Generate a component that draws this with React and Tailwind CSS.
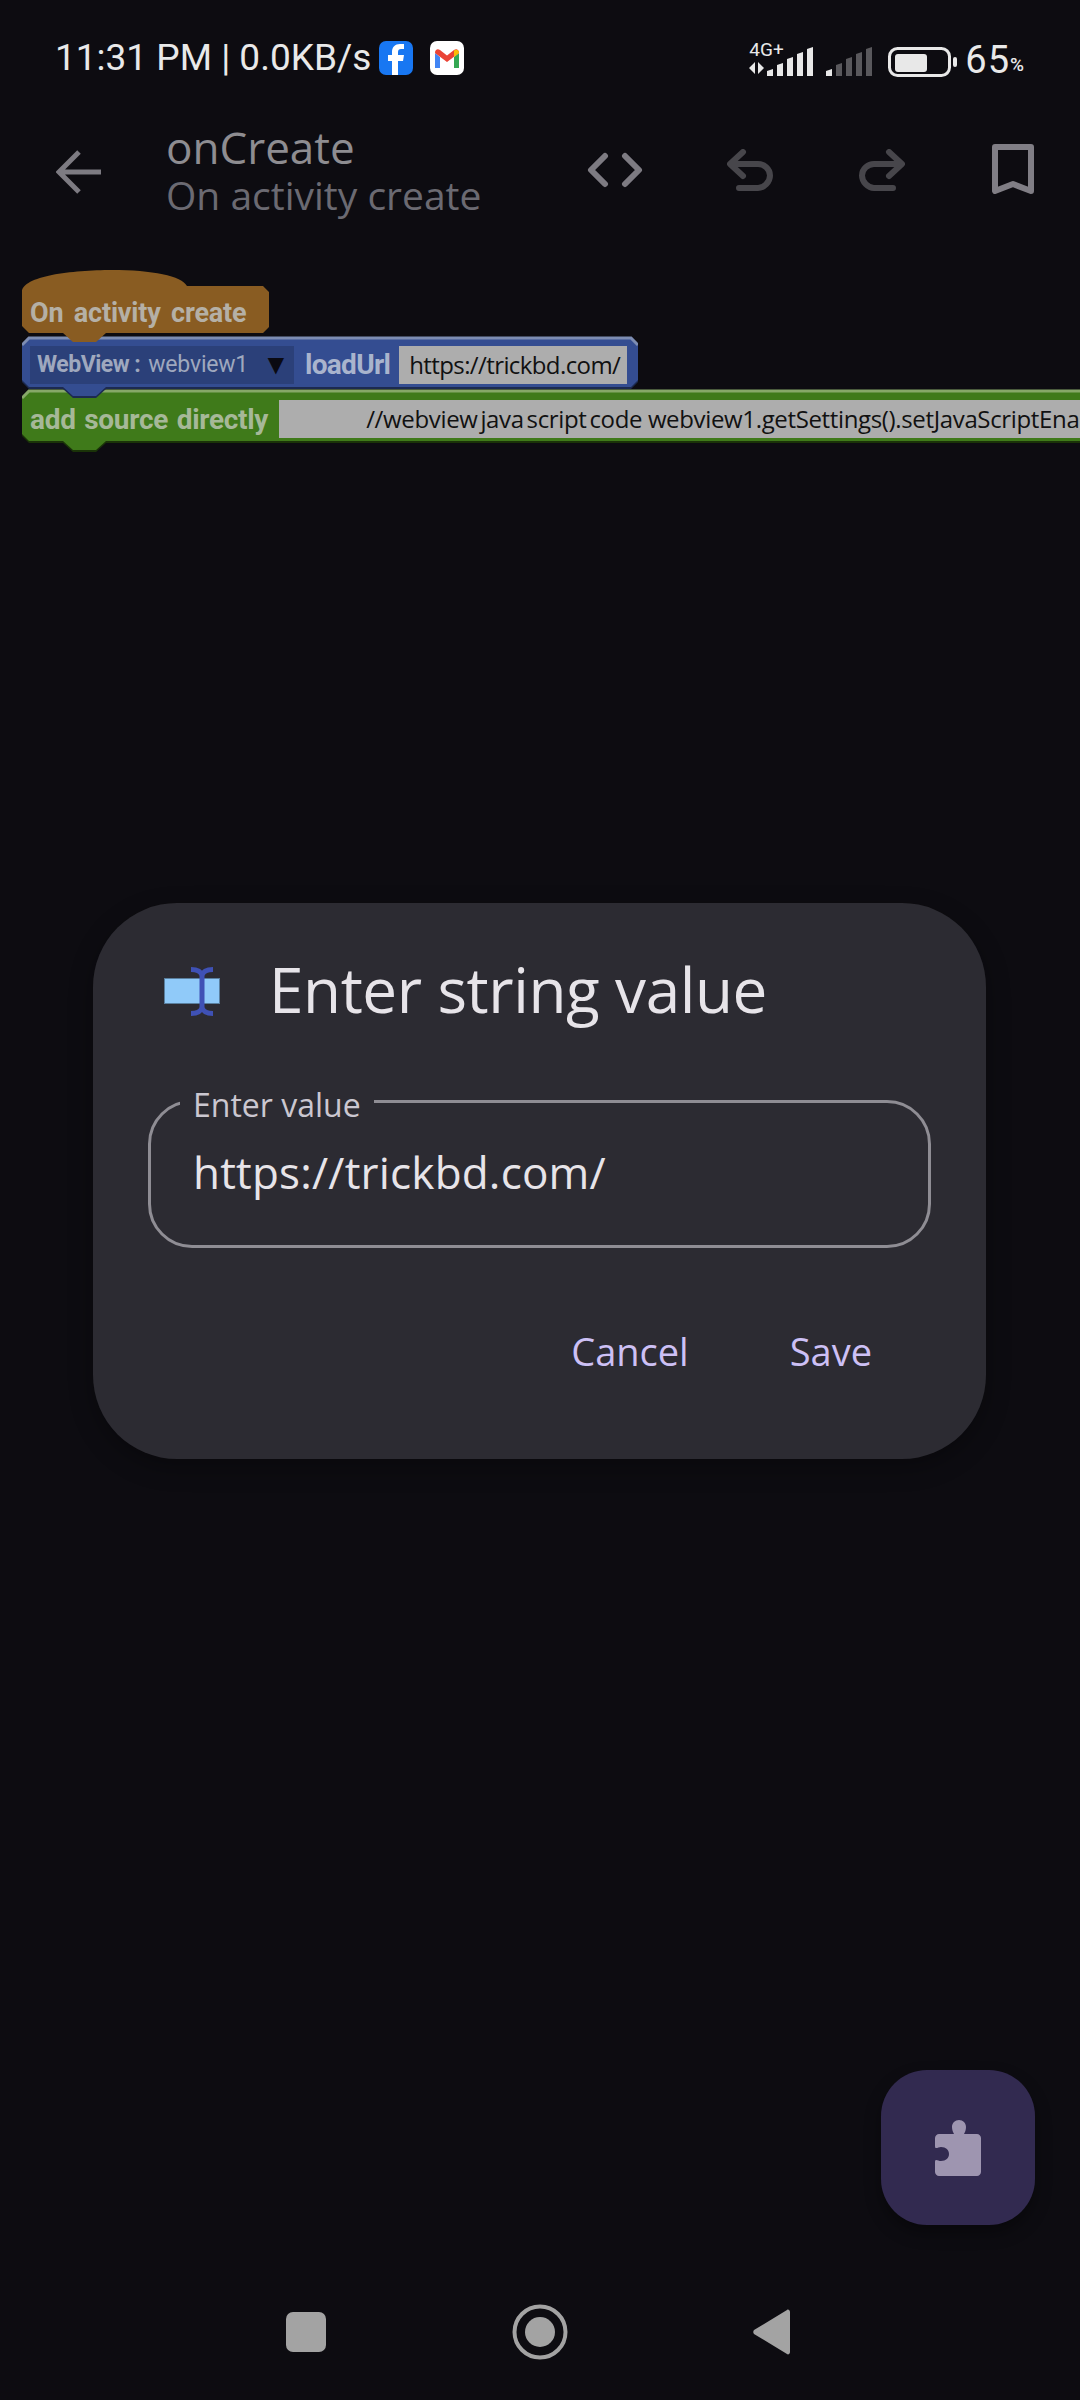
const Bars = ({ dim }) => {
  const heights = [7, 13, 19, 24, 29]
  return (
    <svg width="47" height="29" viewBox="0 0 47 29">
      {heights.map((h, i) => (
        <path
          key={i}
          d={`M${i * 10} ${29 - h + 2}l6 -2v${h}h-6z`}
          fill={dim && i > 0 ? '#59585c' : '#e8e8e8'}
        />
      ))}
    </svg>
  )
}

function StatusBar() {
  return (
    <div className="flex h-[81px] items-end justify-between pl-[55px] pr-[56px] pb-[1px] font-['Roboto',sans-serif] text-[#e9e9e9]">
      <div className="flex items-center">
        <span className="text-[37px] leading-[44px]">11:31 PM | 0.0KB/s</span>
        <svg className="ml-[8px]" width="34" height="34" viewBox="0 0 34 34">
          <rect width="34" height="34" rx="7" fill="#1877f2" />
          <path d="M19 34V20h5l1-6h-6v-3c0-2 1-3 3-3h3V3h-4c-5 0-8 3-8 8v3H9v6h4v14z" fill="#fff" />
        </svg>
        <svg className="ml-[17px]" width="34" height="34" viewBox="0 0 34 34">
          <rect width="34" height="34" rx="7" fill="#fff" />
          <path d="M5 12v15h5V16z" fill="#4285f4" />
          <path d="M24 16v11h5V12z" fill="#34a853" />
          <path d="M5 12c0-4 3-4.500 5-3l7 5.500 7-5.500c2-1.500 5-1 5 3l-12 9z" fill="#ea4335" />
          <path d="M24 9.500c2-1.500 5-1 5 2.500l-5 4z" fill="#fbbc04" />
        </svg>
      </div>
      <div className="flex items-center">
        <div className="relative h-[34px] w-[20px]">
          <span className="absolute left-[3px] top-[-3px] text-[19px] leading-[20px]">4G+</span>
          <svg className="absolute left-[3px] top-[19px]" width="16" height="13" viewBox="0 0 16 13">
            <path d="M6 0v12l-6-6zM9 12V0l6 6z" fill="#e8e8e8" />
          </svg>
        </div>
        <div className="ml-[1px] mt-[3px]"><Bars /></div>
        <div className="ml-[12px] mt-[3px]"><Bars dim /></div>
        <svg className="ml-[15px] mt-[3px]" width="70" height="30" viewBox="0 0 70 30">
          <rect x="1.500" y="1.500" width="60" height="27" rx="8" fill="none" stroke="#e8e8e8" strokeWidth="3" />
          <rect x="7" y="7" width="32" height="18" rx="3" fill="#e8e8e8" />
          <rect x="65" y="10" width="4" height="10" rx="2" fill="#e8e8e8" />
        </svg>
        <span className="ml-[7px] text-[38px] leading-[40px] tracking-[1px]">65</span>
        <span className="mt-[10px] text-[19px] font-medium leading-[22px]">%</span>
      </div>
    </div>
  )
}

function AppBar() {
  return (
    <div className="mt-[42px] flex h-[96px] items-center pl-[56px]">
      <svg className="mt-[2px]" width="46" height="44" viewBox="0 0 46 44" fill="none" stroke="#7d7b82" strokeWidth="5">
        <path d="M45 22H4M23 2L3 22l20 20" />
      </svg>
      <div className="ml-[64px] w-[399px] font-['Open_Sans',sans-serif]">
        <div className="text-[44px] leading-[48px] text-[#8e8d91]">onCreate</div>
        <div className="text-[39px] leading-[48px] text-[#6b6a72]">On activity create</div>
      </div>
      <svg width="56" height="36" viewBox="0 0 56 36" fill="none" stroke="#7d7b82" strokeWidth="6" strokeLinecap="round" strokeLinejoin="round" className="ml-[22px] mt-[-2px]">
        <path d="M18 4L4 18l14 14M38 4l14 14-14 14" />
      </svg>
      <svg width="46" height="42" viewBox="0 0 46 42" fill="none" stroke="#47464b" strokeWidth="6" strokeLinecap="round" strokeLinejoin="round" className="ml-[84px] mt-[-2px]">
        <path d="M16 3L3 15l13 12M4 15h27c6 0 12 5 12 11.500S37 39 31 39H12" />
      </svg>
      <svg width="46" height="42" viewBox="0 0 46 42" fill="none" stroke="#47464b" strokeWidth="6" strokeLinecap="round" strokeLinejoin="round" className="ml-[86px] mt-[-2px]">
        <path d="M30 3l13 12-13 12M42 15H15C9 15 3 20 3 26.500S9 39 15 39h19" />
      </svg>
      <svg width="42" height="50" viewBox="0 0 42 50" fill="none" stroke="#807e85" strokeWidth="6" strokeLinejoin="round" className="ml-[87px] mt-[-5px]">
        <path d="M3 3h36v44l-18-7-18 7z" />
      </svg>
    </div>
  )
}

// puzzle block outline: bevelled corners plus the tab under the block
function Shape({ width, height, fill, light, dark, right = true }) {
  const b = height
  const body = right
    ? `M7 3H${width - 7}L${width} 10V${b - 7}L${width - 7} ${b}H84L74 ${b + 9}H51L41 ${b}H7L0 ${b - 7}V10Z`
    : `M7 3H${width}V${b}H84L74 ${b + 9}H51L41 ${b}H7L0 ${b - 7}V10Z`
  return (
    <svg className="absolute left-0 top-0" width={width} height={b + 11} viewBox={`0 0 ${width} ${b + 11}`}>
      <path d={body} fill={dark} transform="translate(0 2)" />
      <path d={body} fill={fill} />
      {light && <path d={`M0 10L7 3H${right ? width - 7 : width}L${width} ${right ? 10 : 3}`} fill="none" stroke={light} strokeWidth="3" />}
    </svg>
  )
}

function Blocks() {
  return (
    <div className="mt-[51px] flex flex-col pl-[22px] font-['Roboto',sans-serif]">
      <div className="relative z-30 h-[72px] w-[247px]">
        <svg className="absolute left-0 top-0" width="247" height="74" viewBox="0 0 247 74">
          <path d="M0 22C0 6 50 0 90 0C130 0 160 6 165 16H241L247 22V57L241 63H84L74 72H51L41 63H7L0 56Z" fill="#895c22" />
        </svg>
        <span className="absolute left-[8px] top-[27px] text-[27px] font-bold leading-[32px] tracking-[-0.2px] text-[#b5b0a6] [word-spacing:4px]">On activity create</span>
      </div>
      <div className="relative z-20 mt-[-7px] flex h-[62px] w-[616px] items-start pt-[11px] pl-[8px]">
        <Shape width={616} height={52} fill="#344d91" light="#7d8db3" dark="#1c2a50" />
        <div className="relative flex h-[38px] w-[264px] items-center bg-[#2b4079] pl-[7px] text-[23px] leading-[38px] text-[#9fa8be]">
          <span className="font-bold tracking-[-0.5px]">WebView :</span>
          <span className="ml-[8px] tracking-[-0.2px]">webview1</span>
          <span className="ml-[14px] text-[28px] leading-[38px] text-[#0a0a12]">▼</span>
        </div>
        <span className="relative ml-[11px] text-[28px] font-bold leading-[38px] tracking-[-0.7px] text-[#a9b4cd]">loadUrl</span>
        <div className="relative ml-[9px] h-[38px] w-[228px] bg-[#adadad] pl-[10px] font-['Open_Sans',sans-serif] text-[24px] leading-[38px] tracking-[-0.6px] text-[#111]">https://trickbd.com/</div>
      </div>
      <div className="relative z-10 mt-[-9px] flex h-[63px] w-[1058px] items-start pt-[12px] pl-[8px]">
        <Shape width={1058} height={53} fill="#3f7a1a" light="#86a868" dark="#1a3308" right={false} />
        <span className="relative mt-[1px] text-[28px] font-bold leading-[38px] tracking-[-0.3px] text-[#a6b898] [word-spacing:2px]">add source directly</span>
        <div className="relative ml-[11px] h-[38px] min-w-0 flex-1 overflow-hidden whitespace-pre bg-[#adadad] pl-[87px] font-['Open_Sans',sans-serif] text-[24px] leading-[38px] tracking-[-0.35px] text-[#111] [word-spacing:-3px]">//webview java script code  webview1.getSettings().setJavaScriptEnabled(true);</div>
      </div>
    </div>
  )
}

function Dialog() {
  return (
    <div className="absolute left-[93px] top-[903px] h-[556px] w-[893px] rounded-[84px] bg-[#2c2b32] pt-[46px] font-['Open_Sans',sans-serif] shadow-[0_8px_24px_rgba(0,0,0,0.3)]">
      <div className="flex h-[104px] items-center pl-[71px]">
        <svg className="mt-[-18px]" width="56" height="52" viewBox="0 0 56 52">
          <rect x="0.500" y="12.500" width="55" height="25" fill="#90caf9" stroke="#5a7f9e" />
          <path d="M27 3.500c6 0 10 2 11 6 1-4 5-6 11-6M38 9v33M27 47.500c6 0 10-2 11-6 1 4 5 6 11 6" fill="none" stroke="#3f51b5" strokeWidth="5" />
        </svg>
        <h2 className="ml-[49px] mt-[-24px] text-[62px] font-normal leading-[80px] tracking-[-0.4px] text-[#e7e4e9]">Enter string value</h2>
      </div>
      <div className="relative mx-[55px] mt-[47px] h-[148px] rounded-[44px] border-[3px] border-[#8f8d94] pl-[42px] pt-[41px]">
        <span className="absolute left-[29px] top-[-17px] bg-[#2c2b32] px-[13px] text-[32px] leading-[38px] text-[#cbc7d0]">Enter value</span>
        <div className="text-[44px] leading-[56px] tracking-[0.2px] text-[#e7e4e9]">https://trickbd.com/</div>
      </div>
      <div className="mt-[78px] flex justify-end pr-[114px] text-[38px] leading-[50px] text-[#cdc0f5]">
        <span>Cancel</span>
        <span className="ml-[101px]">Save</span>
      </div>
    </div>
  )
}

function Fab() {
  return (
    <div className="absolute left-[881px] top-[2070px] flex h-[155px] w-[154px] items-center justify-center rounded-[46px] bg-[#322a50] shadow-[0_8px_16px_rgba(0,0,0,0.35)]">
      <svg width="46" height="56" viewBox="0 0 46 56">
        <path d="M4 14H19C18 12 17 10 17 7C17 3 20 0 24 0C28 0 31 3 31 7C31 10 30 12 29 14H42C44 14 46 16 46 18V52C46 54 44 56 42 56H4C2 56 0 54 0 52V42C0 38 3 41 6 41C11 41 14 38 14 34C14 30 11 27 6 27C3 27 0 30 0 26V18C0 16 2 14 4 14Z" fill="#9e95b0" />
      </svg>
    </div>
  )
}

function NavBar() {
  return (
    <div className="mt-auto flex h-[110px] items-center pb-[26px] pl-[286px]">
      <div className="h-[40px] w-[40px] rounded-[7px] bg-[#a3a3a3]" />
      <svg className="ml-[186px]" width="56" height="56" viewBox="0 0 56 56">
        <circle cx="28" cy="28" r="25.500" fill="none" stroke="#a3a3a3" strokeWidth="4" />
        <circle cx="28" cy="28" r="15" fill="#a3a3a3" />
      </svg>
      <svg className="ml-[185px]" width="38" height="46" viewBox="0 0 38 46">
        <path d="M37 3V43C37 45 35 46 34 45L1 25C0 24 0 22 1 21L34 1C35 0 37 1 37 3Z" fill="#a3a3a3" />
      </svg>
    </div>
  )
}

export default function App() {
  return (
    <div className="relative flex h-[2400px] w-[1080px] flex-col overflow-hidden bg-[#0d0c11]">
      <StatusBar />
      <AppBar />
      <Blocks />
      <NavBar />
      <Dialog />
      <Fab />
    </div>
  )
}
